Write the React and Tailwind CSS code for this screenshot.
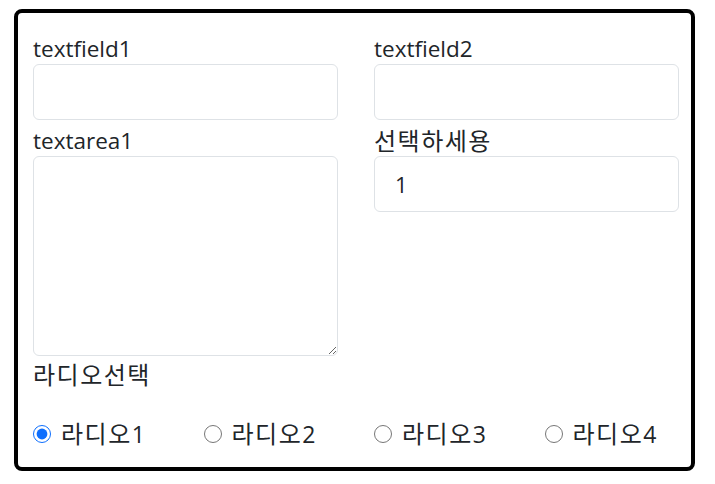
import React, { useState } from "react";

const font = { fontFamily: '"Open Sans", "Noto Sans CJK KR", sans-serif' };

function Ko({ children }) {
  return <span className="text-[24px] tracking-[1.5px]">{children}</span>;
}

export default function App() {
  const [radio, setRadio] = useState("1");

  return (
    <div className="pl-[14px] pt-[9px] text-[#212529]" style={font}>
      <div className="w-[681px] h-[462px] border-4 border-black rounded-lg pl-[15px] pt-[20px]">
        <div className="grid grid-cols-[305px_305px] gap-x-[36px]">
          <div className="flex flex-col">
            <label className="text-[22.5px] leading-[31px]">textfield1</label>
            <input
              type="text"
              className="h-[56px] border border-[#dee2e6] rounded-md px-5 outline-none"
            />
          </div>
          <div className="flex flex-col">
            <label className="text-[22.5px] leading-[31px]">textfield2</label>
            <input
              type="text"
              className="h-[56px] border border-[#dee2e6] rounded-md px-5 outline-none"
            />
          </div>
          <div className="flex flex-col mt-[6px]">
            <label className="text-[22.5px] leading-[30px]">textarea1</label>
            <textarea className="h-[200px] border border-[#dee2e6] rounded-md px-5 py-3 outline-none" />
          </div>
          <div className="flex flex-col mt-[6px]">
            <label className="text-[23px] leading-[30px]">
              <Ko>선택하세용</Ko>
            </label>
            <select
              defaultValue="1"
              className="h-[56px] border border-[#dee2e6] rounded-md pl-5 text-[22px] appearance-none outline-none bg-white"
            >
              <option value="1">1</option>
              <option value="2">2</option>
              <option value="3">3</option>
            </select>
          </div>
        </div>
        <div className="mt-[4px] text-[23px] leading-[30px]">
          <Ko>라디오선택</Ko>
        </div>
        <div className="flex mt-[29px]">
          {["1", "2", "3", "4"].map((n) => (
            <label
              key={n}
              className="w-[170.5px] shrink-0 flex items-center gap-[10px] text-[23px] leading-[30px]"
            >
              <input
                type="radio"
                name="radio"
                checked={radio === n}
                onChange={() => setRadio(n)}
                className="w-[18px] h-[18px] m-0 accent-[#0d6efd]"
              />
              <span>
                <Ko>라디오</Ko>
                {n}
              </span>
            </label>
          ))}
        </div>
      </div>
    </div>
  );
}
